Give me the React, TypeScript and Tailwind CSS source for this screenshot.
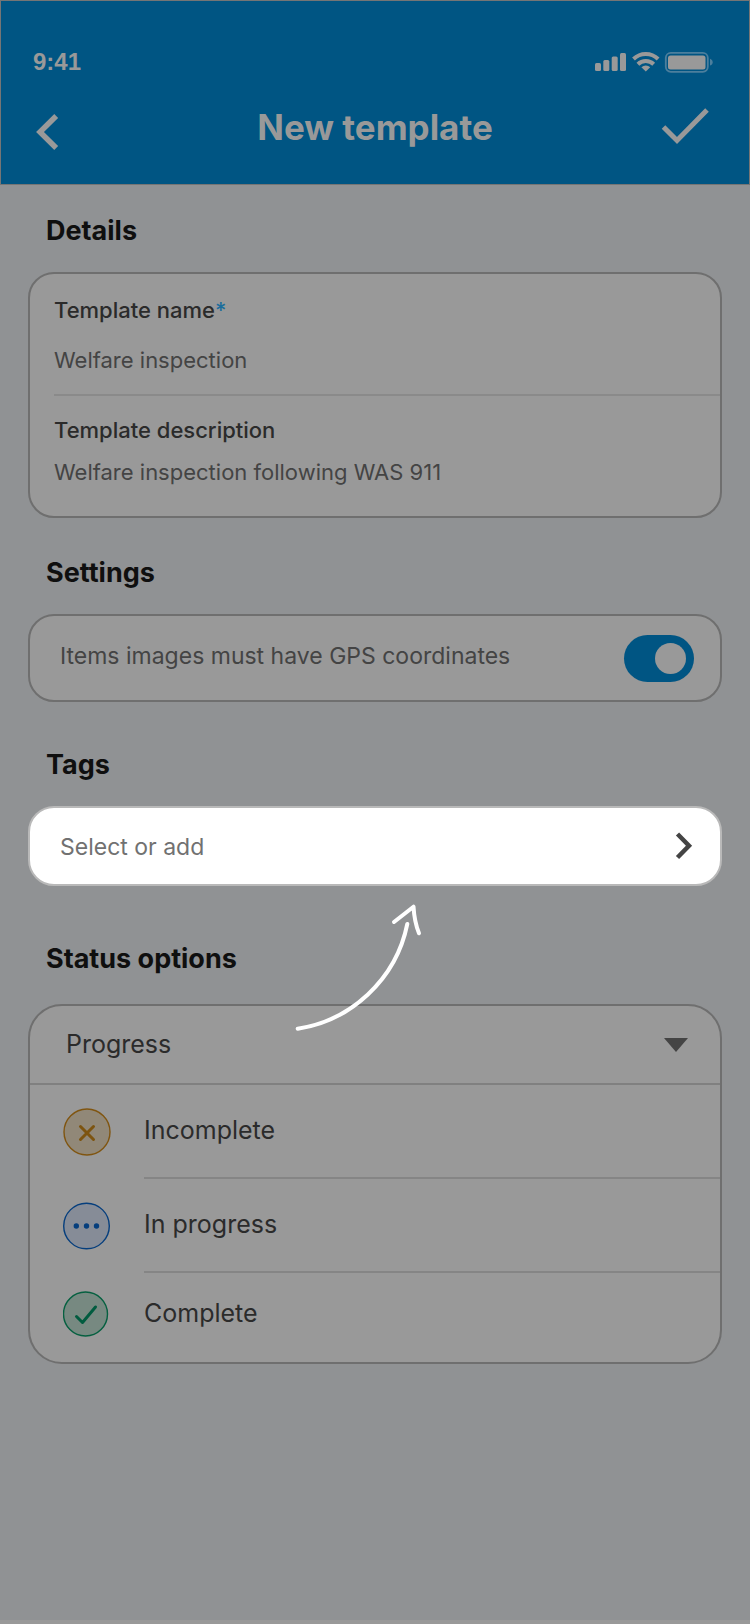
// =============================================
// NewTemplate: template form with the "Tags" step highlighted
// =============================================

import React, { useState } from 'react';

type Status = 'incomplete' | 'progress' | 'complete';

const STATUSES: { id: Status; label: string }[] = [
  { id: 'incomplete', label: 'Incomplete' },
  { id: 'progress', label: 'In progress' },
  { id: 'complete', label: 'Complete' },
];

// Signal, wifi and battery
function SystemIcons() {
  return (
    <svg width="120" height="22" viewBox="0 0 120 22" fill="#999999" aria-hidden="true">
      <rect x="1" y="12" width="6" height="8" rx="1.5" />
      <rect x="9.3" y="9" width="6" height="11" rx="1.5" />
      <rect x="17.7" y="5.5" width="6" height="14.5" rx="1.5" />
      <rect x="26" y="2" width="6" height="18" rx="1.5" />
      <g fill="none" stroke="#999999" strokeWidth="4">
        <path d="M39.500 8a17.600 17.600 0 0 1 24.600 0" />
        <path d="M43.900 13.200a11.400 11.400 0 0 1 15.800 0" />
      </g>
      <path d="M47.400 16.200a6.600 6.600 0 0 1 8.800 0L51.800 20.500z" />
      <rect x="71.800" y="1.800" width="42" height="19" rx="5" fill="none" stroke="#4c7f9d" strokeWidth="1.800" />
      <rect x="74" y="4.500" width="37.500" height="14" rx="2.500" />
      <path d="M116 7.800c2 .8 2.700 2 2.700 3.400s-.7 2.600-2.700 3.400z" fill="#4c7f9d" />
    </svg>
  );
}

function StatusIcon({ status }: { status: Status }) {
  if (status === 'incomplete') {
    return (
      <svg width="48" height="48" viewBox="0 0 48 48" fill="none" aria-hidden="true">
        <circle cx="24" cy="24" r="23" fill="#918878" stroke="#805510" strokeWidth="1.400" />
        <path d="M17.500 18.500l13 13M30.500 18.500l-13 13" stroke="#7d540f" strokeWidth="3" strokeLinecap="round" />
      </svg>
    );
  }
  if (status === 'progress') {
    return (
      <svg width="48" height="48" viewBox="0 0 48 48" fill="none" aria-hidden="true">
        <circle cx="23.500" cy="24" r="22.800" fill="#868c97" stroke="#053e7d" strokeWidth="1.400" />
        <g fill="#053e7d">
          <circle cx="13.300" cy="24" r="2.700" />
          <circle cx="23.500" cy="24" r="2.700" />
          <circle cx="33.500" cy="24" r="2.700" />
        </g>
      </svg>
    );
  }
  return (
    <svg width="48" height="48" viewBox="0 0 48 48" fill="none" aria-hidden="true">
      <circle cx="22.500" cy="24" r="22" fill="#778981" stroke="#056040" strokeWidth="1.400" />
      <path d="M13.500 26.500l6 6L32.500 17" stroke="#005c3f" strokeWidth="3" strokeLinecap="round" strokeLinejoin="round" />
    </svg>
  );
}

export default function App() {
  const [name, setName] = useState('Welfare inspection');
  const [description, setDescription] = useState('Welfare inspection following WAS 911');
  const [gps, setGps] = useState(true);

  return (
    <div className="min-h-screen flex flex-col bg-[#909294] border-b-4 border-[#999999] font-[Inter,'Liberation_Sans',sans-serif]">
      {/* Header */}
      <header className="bg-[#005583] border border-[#757575] pt-[41px] pb-[17px] text-[#999999]">
        <div className="h-10 pl-8 pr-[35px] flex items-center justify-between">
          <span className="font-['Liberation_Sans',sans-serif] text-2xl font-bold">9:41</span>
          <SystemIcons />
        </div>
        <div className="h-20 mt-[5px] px-8 grid grid-cols-[1fr_auto_1fr] items-center">
          <button type="button" aria-label="Back" className="justify-self-start">
            <svg width="26" height="46" viewBox="0 0 26 46" fill="none" aria-hidden="true">
              <path d="M23.200 12L7 28l16.200 16" stroke="currentColor" strokeWidth="5.500" />
            </svg>
          </button>
          <h1 className="text-[35px] font-bold">New template</h1>
          <button type="button" aria-label="Save" className="justify-self-end pr-2">
            <svg width="48" height="40" viewBox="0 0 48 40" fill="none" aria-hidden="true">
              <path d="M2.500 20L16 33.500 46 3" stroke="currentColor" strokeWidth="5" />
            </svg>
          </button>
        </div>
      </header>

      <main className="px-7 pt-7">
        {/* Details */}
        <section>
          <h2 className="pl-[18px] text-[27px] leading-9 font-bold text-[#0f0f0f]">Details</h2>
          <div className="mt-[23px] rounded-[26px] border-2 border-[#6f6f6f] bg-[#999999] pl-6 text-[22px] leading-8">
            <div className="pt-5 pb-[18px] border-b-2 border-[#8a8a8a]">
              <label htmlFor="name" className="block font-medium text-[#2b2b2b]">
                Template name<span className="text-[#1b6d9c]">*</span>
              </label>
              <input
                id="name"
                value={name}
                onChange={e => setName(e.target.value)}
                className="mt-[18px] block h-8 w-full bg-transparent text-[#444444] outline-none"
              />
            </div>
            <div className="pt-[18px] pb-7">
              <label htmlFor="description" className="block font-medium text-[#2b2b2b]">
                Template description
              </label>
              <input
                id="description"
                value={description}
                onChange={e => setDescription(e.target.value)}
                className="mt-2.5 block h-8 w-full bg-transparent text-[#444444] outline-none"
              />
            </div>
          </div>
        </section>

        {/* Settings */}
        <section className="mt-[37px]">
          <h2 className="pl-[18px] text-[27px] leading-9 font-bold text-[#0f0f0f]">Settings</h2>
          <div className="mt-[23px] h-[88px] rounded-[26px] border-2 border-[#6f6f6f] bg-[#999999] pl-[30px] pr-[26px] flex items-center justify-between">
            <label htmlFor="gps" className="pb-1 text-[23px] text-[#444444]">
              Items images must have GPS coordinates
            </label>
            <input
              id="gps"
              type="checkbox"
              role="switch"
              checked={gps}
              onChange={e => setGps(e.target.checked)}
              className="appearance-none shrink-0 w-[70px] h-[47px] rounded-full p-2 flex items-center bg-[#707070] checked:bg-[#005583] checked:justify-end before:block before:size-[31px] before:rounded-full before:bg-[#999999]"
            />
          </div>
        </section>

        {/* Tags, left undimmed */}
        <section className="mt-[45px] relative">
          <h2 className="pl-[18px] text-[27px] leading-9 font-bold text-[#0f0f0f]">Tags</h2>
          <button
            type="button"
            className="mt-[23px] h-20 w-full rounded-[26px] border-2 border-[#b9b9b9] bg-white pt-0.5 pl-[30px] pr-[26px] flex items-center justify-between text-[23px] text-[#717171]"
          >
            Select or add
            <svg width="20" height="30" viewBox="0 0 20 30" fill="none" aria-hidden="true">
              <path d="M3.500 2L15 13.700 3.500 25.500" stroke="#444444" strokeWidth="4.500" />
            </svg>
          </button>
          {/* Hint arrow */}
          <svg
            className="absolute top-full left-1/2 mt-4 -ml-[81px] pointer-events-none"
            width="130"
            height="130"
            viewBox="294 902 130 130"
            fill="none"
            stroke="white"
            strokeWidth="4"
            strokeLinecap="round"
            strokeLinejoin="round"
            aria-hidden="true"
          >
            <path d="M297.700 1028.700C350 1021 396 980 407.300 924" />
            <path d="M394 922l19.500-15.300c.5 9 2 18 5.500 26.600" />
          </svg>
        </section>

        {/* Status options */}
        <section className="mt-[55px]">
          <h2 className="pl-[18px] text-[27px] leading-9 font-bold text-[#0f0f0f]">Status options</h2>
          <div className="mt-[27px] rounded-[34px] border-2 border-[#6f6f6f] bg-[#999999] pb-2 text-[25px] text-[#2b2b2b]">
            <div className="h-[79px] border-b-2 border-[#808080] pl-9 pr-8 flex items-center">
              <select aria-label="Status options" className="grow appearance-none bg-transparent outline-none">
                <option>Progress</option>
              </select>
              <svg width="24" height="14" viewBox="0 0 24 14" fill="#444444" aria-hidden="true">
                <path d="M0 0h24L12 14z" />
              </svg>
            </div>
            <ul>
              {STATUSES.map(s => (
                <li key={s.id} className="group flex items-center pl-[33px]">
                  <StatusIcon status={s.id} />
                  <span className="ml-[33px] grow h-[94px] border-b-2 border-[#858585] flex items-center group-last:h-[81px] group-last:border-b-0">
                    {s.label}
                  </span>
                </li>
              ))}
            </ul>
          </div>
        </section>
      </main>
    </div>
  );
}
